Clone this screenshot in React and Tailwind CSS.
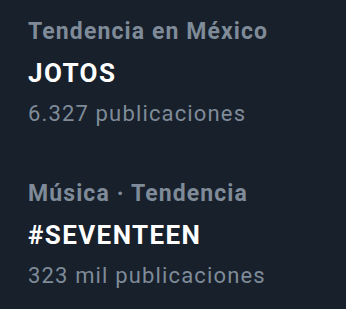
import React from 'react';

const trends = [
  { context: 'Tendencia en México', name: 'JOTOS', count: '6.327 publicaciones' },
  { context: 'Música · Tendencia', name: '#SEVENTEEN', count: '323 mil publicaciones' },
];

function TrendItem({ context, name, count }) {
  return (
    <div className="flex flex-col">
      <span className="text-[23px] leading-[40px] font-bold tracking-[1.1px] text-[#7f8b98]">{context}</span>
      <span className="text-[26px] leading-[42px] font-bold tracking-[1.4px] text-white">{name}</span>
      <span className="text-[22px] leading-[40px] tracking-[1.15px] text-[#7f8b98]">{count}</span>
    </div>
  );
}

export default function App() {
  return (
    <div
      className="w-[346px] h-[309px] bg-[#17202b] px-7 pt-[12px] flex flex-col gap-[40px] overflow-hidden"
      style={{ fontFamily: 'Roboto, sans-serif' }}
    >
      {trends.map((t, i) => (
        <TrendItem key={i} {...t} />
      ))}
    </div>
  );
}
